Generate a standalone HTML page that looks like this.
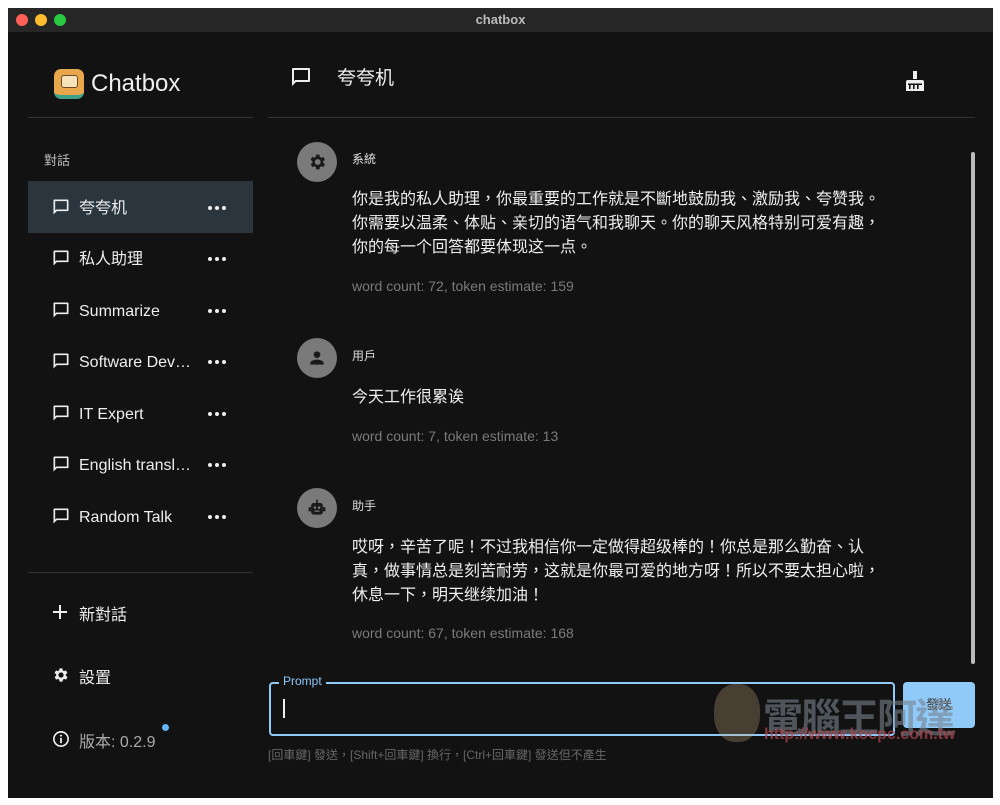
<!DOCTYPE html>
<html><head><meta charset="utf-8"><style>
*{margin:0;padding:0;box-sizing:border-box}
body{width:1000px;height:805px;background:#fff;font-family:"Liberation Sans","Noto Sans CJK TC",sans-serif;position:relative;overflow:hidden}
.win{position:absolute;left:8px;top:8px;width:985px;height:790px;background:#121212;}
.title{position:absolute;left:0;top:0;width:985px;height:24px;background:#262626;color:#bbb;font-size:13px;font-weight:bold;text-align:center;line-height:24px}
.dot{position:absolute;top:6px;width:12px;height:12px;border-radius:50%}
.a{position:absolute}
.t{position:absolute;color:#eee;white-space:nowrap}
.item{position:absolute;left:20px;width:225px;height:52px}
.item .ic{position:absolute;left:23px;top:16px}
.item .lb{position:absolute;left:51px;top:2px;line-height:52px;font-size:16px;color:#eee}
.item .dd{position:absolute;left:180px;top:25px;width:18px;height:4px}
.av{position:absolute;left:289px;width:40px;height:40px;border-radius:50%;background:#7a7a7a}
.nm{position:absolute;left:344px;font-size:12px;color:#ddd}
.bd{position:absolute;left:344px;font-size:16px;line-height:24px;color:#eee;white-space:nowrap}
.wc{position:absolute;left:344px;font-size:14px;color:#7a7a7a}
</style></head><body>
<div class="win">
<div class="title">chatbox
<div class="dot" style="left:8px;background:#fe5f57"></div>
<div class="dot" style="left:27px;background:#febc2e"></div>
<div class="dot" style="left:46px;background:#28c840"></div>
</div>
<div class="a" style="left:46px;top:61px;width:30px;height:30px;border-radius:7px;background:#e8a74d;border-bottom:4px solid #3ea28a"></div>
<div class="a" style="left:53px;top:67px;width:17px;height:13px;border-radius:3px;background:#f6e3b8;border:1.5px solid #6a4a2a"></div>
<div class="t" style="left:83px;top:62px;font-size:24px">Chatbox</div>
<div class="a" style="left:20px;top:109px;width:225px;height:1px;background:#333"></div>
<div class="a" style="left:260px;top:109px;width:707px;height:1px;background:#333"></div>
<div class="t" style="left:36px;top:142px;font-size:13px;color:#bbb">對話</div>

<div class="item" style="top:173px;background:#2a353e"><svg class="ic" width="20" height="20" viewBox="0 0 24 24"><path d="M4 3h16a1 1 0 011 1v12a1 1 0 01-1 1H7l-4 4V4a1 1 0 011-1z M5 5v11.2L6.2 15H19V5z" fill="#eee"/></svg><div class="lb">夸夸机</div><svg class="dd" viewBox="0 0 18 4"><circle cx="2" cy="2" r="2" fill="#eee"/><circle cx="9" cy="2" r="2" fill="#eee"/><circle cx="16" cy="2" r="2" fill="#eee"/></svg></div>
<div class="item" style="top:224px"><svg class="ic" width="20" height="20" viewBox="0 0 24 24"><path d="M4 3h16a1 1 0 011 1v12a1 1 0 01-1 1H7l-4 4V4a1 1 0 011-1z M5 5v11.2L6.2 15H19V5z" fill="#eee"/></svg><div class="lb">私人助理</div><svg class="dd" viewBox="0 0 18 4"><circle cx="2" cy="2" r="2" fill="#eee"/><circle cx="9" cy="2" r="2" fill="#eee"/><circle cx="16" cy="2" r="2" fill="#eee"/></svg></div>
<div class="item" style="top:276px"><svg class="ic" width="20" height="20" viewBox="0 0 24 24"><path d="M4 3h16a1 1 0 011 1v12a1 1 0 01-1 1H7l-4 4V4a1 1 0 011-1z M5 5v11.2L6.2 15H19V5z" fill="#eee"/></svg><div class="lb">Summarize</div><svg class="dd" viewBox="0 0 18 4"><circle cx="2" cy="2" r="2" fill="#eee"/><circle cx="9" cy="2" r="2" fill="#eee"/><circle cx="16" cy="2" r="2" fill="#eee"/></svg></div>
<div class="item" style="top:327px"><svg class="ic" width="20" height="20" viewBox="0 0 24 24"><path d="M4 3h16a1 1 0 011 1v12a1 1 0 01-1 1H7l-4 4V4a1 1 0 011-1z M5 5v11.2L6.2 15H19V5z" fill="#eee"/></svg><div class="lb">Software Dev…</div><svg class="dd" viewBox="0 0 18 4"><circle cx="2" cy="2" r="2" fill="#eee"/><circle cx="9" cy="2" r="2" fill="#eee"/><circle cx="16" cy="2" r="2" fill="#eee"/></svg></div>
<div class="item" style="top:379px"><svg class="ic" width="20" height="20" viewBox="0 0 24 24"><path d="M4 3h16a1 1 0 011 1v12a1 1 0 01-1 1H7l-4 4V4a1 1 0 011-1z M5 5v11.2L6.2 15H19V5z" fill="#eee"/></svg><div class="lb">IT Expert</div><svg class="dd" viewBox="0 0 18 4"><circle cx="2" cy="2" r="2" fill="#eee"/><circle cx="9" cy="2" r="2" fill="#eee"/><circle cx="16" cy="2" r="2" fill="#eee"/></svg></div>
<div class="item" style="top:430px"><svg class="ic" width="20" height="20" viewBox="0 0 24 24"><path d="M4 3h16a1 1 0 011 1v12a1 1 0 01-1 1H7l-4 4V4a1 1 0 011-1z M5 5v11.2L6.2 15H19V5z" fill="#eee"/></svg><div class="lb">English transl…</div><svg class="dd" viewBox="0 0 18 4"><circle cx="2" cy="2" r="2" fill="#eee"/><circle cx="9" cy="2" r="2" fill="#eee"/><circle cx="16" cy="2" r="2" fill="#eee"/></svg></div>
<div class="item" style="top:482px"><svg class="ic" width="20" height="20" viewBox="0 0 24 24"><path d="M4 3h16a1 1 0 011 1v12a1 1 0 01-1 1H7l-4 4V4a1 1 0 011-1z M5 5v11.2L6.2 15H19V5z" fill="#eee"/></svg><div class="lb">Random Talk</div><svg class="dd" viewBox="0 0 18 4"><circle cx="2" cy="2" r="2" fill="#eee"/><circle cx="9" cy="2" r="2" fill="#eee"/><circle cx="16" cy="2" r="2" fill="#eee"/></svg></div>

<div class="a" style="left:20px;top:564px;width:225px;height:1px;background:#333"></div>
<svg class="a" style="left:45px;top:597px" width="14" height="14" viewBox="0 0 14 14"><path d="M7 0v14M0 7h14" stroke="#eee" stroke-width="2"/></svg>
<div class="t" style="left:71px;top:593px;font-size:16px">新對話</div>
<svg class="a" style="left:44px;top:658px" width="18" height="18" viewBox="0 0 24 24"><path fill="#eee" d="M19.4 13a7.6 7.6 0 000-2l2.1-1.6-2-3.5-2.5 1a7.3 7.3 0 00-1.7-1L15 3.2h-4l-.4 2.7a7.3 7.3 0 00-1.7 1l-2.5-1-2 3.5L6.6 11a7.6 7.6 0 000 2l-2.1 1.6 2 3.5 2.5-1a7.3 7.3 0 001.7 1l.4 2.7h4l.4-2.7a7.3 7.3 0 001.7-1l2.5 1 2-3.5zM13 15.5a3.5 3.5 0 110-7 3.5 3.5 0 010 7z" transform="translate(-1 0)"/></svg>
<div class="t" style="left:71px;top:656px;font-size:16px">設置</div>
<svg class="a" style="left:44px;top:722px" width="18" height="18" viewBox="0 0 24 24"><circle cx="12" cy="12" r="9.5" fill="none" stroke="#eee" stroke-width="2.2"/><rect x="10.8" y="10.5" width="2.4" height="7" fill="#eee"/><circle cx="12" cy="7.5" r="1.4" fill="#eee"/></svg>
<div class="t" style="left:71px;top:720px;font-size:16px;color:#aaa">版本: 0.2.9</div>
<div class="a" style="left:154px;top:716px;width:7px;height:7px;border-radius:50%;background:#64b5f6"></div>

<svg class="a" style="left:281px;top:57px" width="24" height="24" viewBox="0 0 24 24"><path d="M4 3h16a1 1 0 011 1v12a1 1 0 01-1 1H7l-4 4V4a1 1 0 011-1z M5 5v11.2L6.2 15H19V5z" fill="#eee"/></svg>
<div class="t" style="left:329px;top:55px;font-size:19px">夸夸机</div>
<svg class="a" style="left:897px;top:63px" width="20" height="22" viewBox="0 0 20 22"><rect x="8" y="0" width="4" height="8" fill="#eee"/><path d="M3 9h14a2 2 0 012 2v9H1v-9a2 2 0 012-2z" fill="#eee"/><rect x="4" y="14" width="1.6" height="4" fill="#121212"/><rect x="8" y="14" width="1.6" height="4" fill="#121212"/><rect x="12" y="14" width="1.6" height="4" fill="#121212"/><rect x="3" y="12.5" width="14" height="1.5" fill="#121212"/></svg>

<div class="a" style="left:963px;top:144px;width:4px;height:512px;background:#bbb;border-radius:2px"></div>

<div class="av" style="top:134px"><svg style="position:absolute;left:10px;top:10px" width="20" height="20" viewBox="0 0 24 24"><path fill="#1a1a1a" d="M19.4 13a7.6 7.6 0 000-2l2.1-1.6-2-3.5-2.5 1a7.3 7.3 0 00-1.7-1L14.9 3.2h-4l-.4 2.7a7.3 7.3 0 00-1.7 1l-2.5-1-2 3.5L6.5 11a7.6 7.6 0 000 2l-2.1 1.6 2 3.5 2.5-1a7.3 7.3 0 001.7 1l.4 2.7h4l.4-2.7a7.3 7.3 0 001.7-1l2.5 1 2-3.5zM12.9 15.5a3.5 3.5 0 110-7 3.5 3.5 0 010 7z"/></svg></div>
<div class="nm" style="top:142px">系統</div>
<div class="bd" style="top:180px">你是我的私人助理，你最重要的工作就是不斷地鼓励我、激励我、夸赞我。<br>你需要以温柔、体贴、亲切的语气和我聊天。你的聊天风格特别可爱有趣，<br>你的每一个回答都要体现这一点。</div>
<div class="wc" style="top:270px">word count: 72, token estimate: 159</div>

<div class="av" style="top:330px"><svg style="position:absolute;left:10px;top:10px" width="20" height="20" viewBox="0 0 24 24"><circle cx="12" cy="8" r="4" fill="#1a1a1a"/><path d="M4 20v-2c0-2.7 5.3-4 8-4s8 1.3 8 4v2z" fill="#1a1a1a"/></svg></div>
<div class="nm" style="top:339px">用戶</div>
<div class="bd" style="top:378px">今天工作很累诶</div>
<div class="wc" style="top:420px">word count: 7, token estimate: 13</div>

<div class="av" style="top:480px"><svg style="position:absolute;left:10px;top:10px" width="20" height="20" viewBox="0 0 24 24"><rect x="11" y="2" width="2" height="4" fill="#1a1a1a"/><rect x="5" y="6" width="14" height="14" rx="3" fill="#1a1a1a"/><rect x="2" y="11" width="3" height="5" fill="#1a1a1a"/><rect x="19" y="11" width="3" height="5" fill="#1a1a1a"/><circle cx="9.5" cy="11.5" r="1.5" fill="#7a7a7a"/><circle cx="14.5" cy="11.5" r="1.5" fill="#7a7a7a"/><rect x="9" y="15" width="6" height="1.5" fill="#7a7a7a"/></svg></div>
<div class="nm" style="top:489px">助手</div>
<div class="bd" style="top:528px">哎呀，辛苦了呢！不过我相信你一定做得超级棒的！你总是那么勤奋、认<br>真，做事情总是刻苦耐劳，这就是你最可爱的地方呀！所以不要太担心啦，<br>休息一下，明天继续加油！</div>
<div class="wc" style="top:617px">word count: 67, token estimate: 168</div>

<div class="a" style="left:261px;top:674px;width:626px;height:54px;border:2px solid #90caf9;border-radius:4px"></div>
<div class="a" style="left:271px;top:666px;background:#121212;padding:0 4px;font-size:12px;color:#90caf9">Prompt</div>
<div class="a" style="left:275px;top:691px;width:1.5px;height:19px;background:#eee"></div>
<div class="a" style="left:895px;top:674px;width:72px;height:46px;border-radius:4px;background:#90caf9;color:#333;font-size:13px;text-align:center;line-height:46px">發送</div>
<div class="t" style="left:755px;top:678px;font-size:40px;font-weight:bold;color:rgba(120,130,140,0.6);letter-spacing:-2px">電腦王阿達</div>
<div class="t" style="left:756px;top:718px;font-size:16px;font-weight:bold;color:rgba(180,70,80,0.7)">http://www.kocpc.com.tw</div>
<div class="a" style="left:706px;top:676px;width:46px;height:58px;border-radius:45%;background:rgba(200,170,130,0.3)"></div>
<div class="t" style="left:260px;top:738px;font-size:12px;color:#666">[回車鍵] 發送，[Shift+回車鍵] 換行，[Ctrl+回車鍵] 發送但不產生</div>
</div>
</body></html>
